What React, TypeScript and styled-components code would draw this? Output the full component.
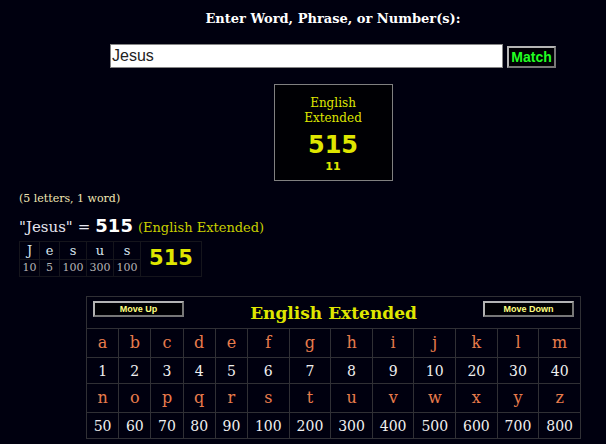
import React, { useState } from "react";
import styled, { createGlobalStyle } from "styled-components";

const GlobalStyle = createGlobalStyle`
  * { box-sizing: border-box; }
  body {
    margin: 0;
    background: #00000f;
    color: #f0f0f0;
    font-family: "DejaVu Serif", "Bookman Old Style", serif;
  }
`;

const Page = styled.main`
  overflow: hidden;
`;

const SearchForm = styled.form`
  display: flex;
  flex-direction: column;
  padding: 10px 50px 0 110px;
`;

const Prompt = styled.label`
  font-size: 13px;
  font-weight: bold;
  line-height: 18px;
  text-align: center;
  white-space: nowrap;
  color: #ffffff;
`;

const SearchRow = styled.div`
  display: flex;
  align-items: flex-end;
  gap: 4px;
  margin-top: 16px;
`;

const SearchInput = styled.input`
  flex: 1;
  min-width: 0;
  height: 24px;
  padding: 0 1px;
  border: 1px solid #858585;
  border-radius: 0;
  background: #ffffff;
  color: #222222;
  font: 16px "Liberation Sans", Arial, sans-serif;
`;

const BevelButton = styled.button`
  border: 2px solid;
  border-color: #b4b4b4 #777777 #777777 #b4b4b4;
  border-radius: 0;
  background: #000004;
  font-family: "Liberation Sans", Arial, sans-serif;
  font-weight: bold;
`;

const MatchButton = styled(BevelButton)`
  width: 49px;
  height: 22px;
  padding: 0;
  color: #22ff22;
  font-size: 14px;
  line-height: 16px;
`;

const MoveButton = styled(BevelButton)`
  width: 91px;
  height: 16px;
  padding: 0;
  color: #ffff80;
  font-size: 9px;
  line-height: 12px;
`;

const ResultArea = styled.section`
  display: flex;
  justify-content: center;
  padding: 16px 0 0 60px;
`;

const ResultCard = styled.div`
  display: flex;
  flex-direction: column;
  align-items: center;
  width: 119px;
  padding: 11px 24px 6px;
  border: 1px solid #808080;
  background: #000004;
  color: #dfe600;
  text-align: center;
`;

const CipherName = styled.div`
  font-size: 12px;
  line-height: 15px;
`;

const Figure = styled.strong<{ $size: number; $color?: string }>`
  font-family: "DejaVu Sans", Verdana, sans-serif;
  font-size: ${(p) => p.$size}px;
  color: ${(p) => p.$color ?? "#dfe600"};
`;

const CardTotal = styled(Figure)`
  margin-top: 5px;
  line-height: 28px;
`;

const Reduced = styled(Figure)`
  line-height: 15px;
`;

const Breakdown = styled.section`
  padding: 10px 19px 0;
`;

const Count = styled.p`
  margin: 0;
  color: #f0e6b4;
  font-size: 11px;
  line-height: 16px;
`;

const Equation = styled.p`
  display: flex;
  align-items: baseline;
  gap: 5px;
  margin: 7px 0 1px;
  font-size: 15px;
  line-height: 24px;
  color: #e6e6f0;
`;

const CipherNote = styled.span`
  font-size: 13px;
  color: #c8cf00;
`;

const WordTable = styled.table`
  border-collapse: collapse;
  text-align: center;

  td {
    padding: 0 2px;
    border: 1px solid #15151c;
    line-height: 16px;
  }
`;

const WordLetter = styled.td`
  height: 18px;
  min-width: 20px;
  font-size: 13px;
  color: #d8e6f0;
`;

const WordValue = styled.td`
  height: 17px;
  min-width: 20px;
  font-size: 11px;
  color: #b4b4b4;
`;

const SumCell = styled.td`
  width: 61px;
`;

const ChartArea = styled.section`
  padding: 19px 25px 5px 86px;
`;

const Chart = styled.table`
  width: 100%;
  table-layout: fixed;
  border-collapse: collapse;
  text-align: center;

  th, td {
    padding: 0;
    border: 1px solid #303035;
  }
`;

const Col = styled.col<{ $wide: boolean }>`
  width: ${(p) => (p.$wide ? "8.4%" : "6.5%")};
`;

const ChartBar = styled.div`
  display: flex;
  align-items: flex-start;
  justify-content: space-between;
  height: 31px;
  padding: 4px 6px 0;
`;

const ChartTitle = styled.h2`
  margin: 0;
  color: #dfe600;
  font-size: 17px;
  line-height: 24px;
  white-space: nowrap;
`;

const Letter = styled.td`
  height: 29px;
  color: #e87c4c;
  font-size: 16px;
  line-height: 26px;
`;

const Value = styled.td`
  height: 26px;
  color: #f0f0f0;
  font-size: 14px;
  line-height: 22px;
`;

const word = [["J", 10], ["e", 5], ["s", 100], ["u", 300], ["s", 100]];
const values = [1, 2, 3, 4, 5, 6, 7, 8, 9, 10, 20, 30, 40, 50, 60, 70, 80, 90, 100, 200, 300, 400, 500, 600, 700, 800];
const alphabet = ["abcdefghijklm", "nopqrstuvwxyz"];

export default function App() {
  const [phrase, setPhrase] = useState("Jesus");

  return (
    <Page>
      <GlobalStyle />
      <SearchForm onSubmit={(e) => e.preventDefault()}>
        <Prompt htmlFor="phrase">Enter Word, Phrase, or Number(s):</Prompt>
        <SearchRow>
          <SearchInput id="phrase" type="text" value={phrase} onChange={(e) => setPhrase(e.target.value)} />
          <MatchButton type="submit">Match</MatchButton>
        </SearchRow>
      </SearchForm>

      <ResultArea>
        <ResultCard>
          <CipherName>English Extended</CipherName>
          <CardTotal $size={24}>515</CardTotal>
          <Reduced $size={11}>11</Reduced>
        </ResultCard>
      </ResultArea>

      <Breakdown>
        <Count>(5 letters, 1 word)</Count>
        <Equation>
          <span>"Jesus"</span>
          <span>=</span>
          <Figure $size={18} $color="#ffffff">515</Figure>
          <CipherNote>(English Extended)</CipherNote>
        </Equation>
        <WordTable>
          <colgroup>
            <col width={20} />
            <col width={20} />
            <col width={27} />
            <col width={27} />
            <col width={27} />
            <col width={60} />
          </colgroup>
          <tbody>
            <tr>
              {word.map(([letter], i) => <WordLetter key={i}>{letter}</WordLetter>)}
              <SumCell rowSpan={2}><Figure $size={21}>515</Figure></SumCell>
            </tr>
            <tr>
              {word.map(([, value], i) => <WordValue key={i}>{value}</WordValue>)}
            </tr>
          </tbody>
        </WordTable>
      </Breakdown>

      <ChartArea>
        <Chart>
          <colgroup>
            {values.slice(0, 13).map((v, i) => <Col key={v} $wide={i > 4} />)}
          </colgroup>
          <thead>
            <tr>
              <th colSpan={13}>
                <ChartBar>
                  <MoveButton type="button">Move Up</MoveButton>
                  <ChartTitle>English Extended</ChartTitle>
                  <MoveButton type="button">Move Down</MoveButton>
                </ChartBar>
              </th>
            </tr>
          </thead>
          <tbody>
            {alphabet.map((letters, row) => (
              <React.Fragment key={letters}>
                <tr>{[...letters].map((l) => <Letter key={l}>{l}</Letter>)}</tr>
                <tr>{values.slice(row * 13, row * 13 + 13).map((v) => <Value key={v}>{v}</Value>)}</tr>
              </React.Fragment>
            ))}
          </tbody>
        </Chart>
      </ChartArea>
    </Page>
  );
}
